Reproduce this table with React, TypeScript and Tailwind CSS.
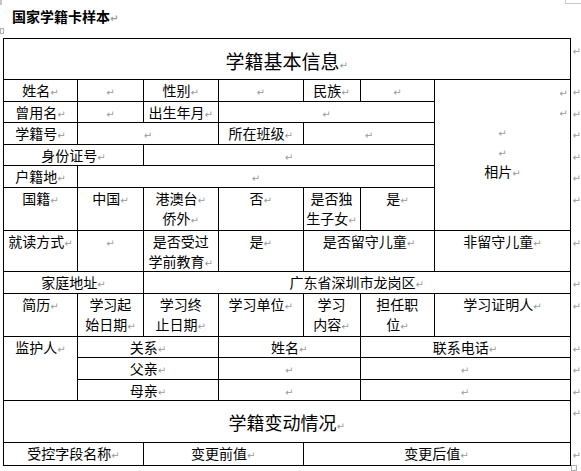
import React from 'react';

const M = () => (
  <span className="inline-block align-baseline text-[10px] leading-none text-[#9a9a9a]" style={{ fontFamily: '"DejaVu Sans", sans-serif' }}>↵</span>
);

const td = 'border border-black px-[2px] text-center align-top text-[14px] leading-[20px] text-black whitespace-nowrap';

interface CProps {
  children?: React.ReactNode;
  span?: number;
  rows?: number;
  mark?: boolean;
  className?: string;
}

const C: React.FC<CProps> = ({ children, span, rows, mark = true, className = '' }) => (
  <td colSpan={span} rowSpan={rows} className={`${td} ${className}`}>
    {children}
    {mark && <M />}
  </td>
);

const End = () => (
  <td className="border-0 pl-[2px] align-top text-left text-[14px] leading-[20px]">
    <M />
  </td>
);

export default function App() {
  return (
    <div className="relative h-[471px] w-[581px] overflow-hidden bg-white" style={{ fontFamily: '"Noto Sans CJK SC", "Noto Sans", sans-serif' }}>
      {/* page corner marks */}
      <div className="absolute left-0 top-0 h-[5px] w-[2px] bg-[#c8c8c8]" />
      <div className="absolute left-[565px] top-0 h-[4px] w-[1px] bg-[#c8c8c8]" />
      <div className="absolute left-[565px] top-[3px] h-[1px] w-[16px] bg-[#c8c8c8]" />
      <div className="absolute left-0 top-[28px] h-[6px] w-[4px] border border-[#b0b0b0]" />
      <div className="absolute left-[571px] top-[465px] h-[6px] w-[6px] border border-[#b0b0b0]" />

      <div className="pl-[12px] pt-[6px] text-[14px] font-bold leading-[20px] text-black">
        国家学籍卡样本<M />
      </div>

      <table className="ml-[3px] mt-[12px] table-fixed border-collapse">
        <colgroup>
          <col className="w-[74px]" />
          <col className="w-[66px]" />
          <col className="w-[75px]" />
          <col className="w-[85px]" />
          <col className="w-[57px]" />
          <col className="w-[75px]" />
          <col className="w-[136px]" />
          <col className="w-[10px]" />
        </colgroup>
        <tbody>
          <tr className="h-[41px]">
            <td colSpan={7} className="border border-black pt-[3px] text-center align-middle text-[19px] leading-[24px] text-black">
              学籍基本信息<M />
            </td>
            <End />
          </tr>
          <tr className="h-[22px]">
            <C>姓名</C>
            <C />
            <C>性别</C>
            <C />
            <C>民族</C>
            <C />
            <td rowSpan={6} className="border border-black px-[2px] pt-[1px] align-top text-[14px] leading-[20px] text-black">
              <div className="text-right"><M /></div>
              <div className="text-right"><M /></div>
              <div className="text-center"><M /></div>
              <div className="text-center"><M /></div>
              <div className="text-center">相片<M /></div>
            </td>
            <End />
          </tr>
          <tr className="h-[21px]">
            <C>曾用名</C>
            <C />
            <C>出生年月</C>
            <C span={3} />
            <End />
          </tr>
          <tr className="h-[22px]">
            <C>学籍号</C>
            <C span={2} />
            <C>所在班级</C>
            <C span={2} />
            <End />
          </tr>
          <tr className="h-[21px]">
            <C span={2}>身份证号</C>
            <C span={4} />
            <End />
          </tr>
          <tr className="h-[22px]">
            <C>户籍地</C>
            <C span={5} />
            <End />
          </tr>
          <tr className="h-[43px]">
            <C>国籍</C>
            <C>中国</C>
            <C>港澳台<M /><br />侨外</C>
            <C>否</C>
            <C>是否独<br />生子女</C>
            <C>是</C>
            <End />
          </tr>
          <tr className="h-[41px]">
            <C>就读方式</C>
            <C />
            <C>是否受过<br />学前教育</C>
            <C>是</C>
            <C span={2}>是否留守儿童</C>
            <C>非留守儿童</C>
            <End />
          </tr>
          <tr className="h-[22px]">
            <C span={2}>家庭地址</C>
            <C span={5}>广东省深圳市龙岗区</C>
            <End />
          </tr>
          <tr className="h-[43px]">
            <C>简历</C>
            <C>学习起<br />始日期</C>
            <C>学习终<br />止日期</C>
            <C>学习单位</C>
            <C>学习<br />内容</C>
            <C>担任职<br />位</C>
            <C>学习证明人</C>
            <End />
          </tr>
          <tr className="h-[20px]">
            <C rows={3}>监护人</C>
            <C span={2}>关系</C>
            <C span={2}>姓名</C>
            <C span={2}>联系电话</C>
            <End />
          </tr>
          <tr className="h-[22px]">
            <C span={2}>父亲</C>
            <C span={2} />
            <C span={2} />
            <End />
          </tr>
          <tr className="h-[21px]">
            <C span={2}>母亲</C>
            <C span={2} />
            <C span={2} />
            <End />
          </tr>
          <tr className="h-[42px]">
            <td colSpan={7} className="border border-black pt-[1px] text-center align-middle text-[18px] leading-[24px] text-black">
              学籍变动情况<M />
            </td>
            <End />
          </tr>
          <tr className="h-[23px]">
            <C span={2}>受控字段名称</C>
            <C span={2}>变更前值</C>
            <C span={3}>变更后值</C>
            <End />
          </tr>
        </tbody>
      </table>
    </div>
  );
}
